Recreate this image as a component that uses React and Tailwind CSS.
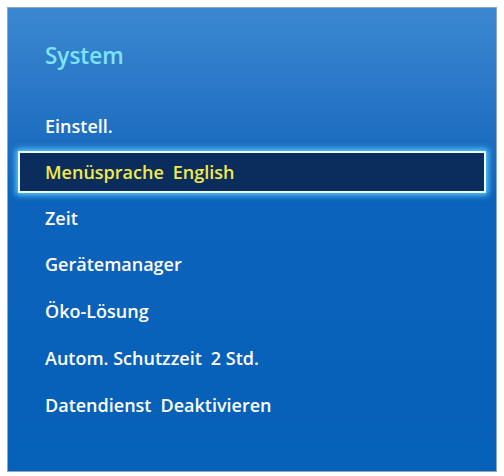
const items = [
  { label: "Einstell." },
  { label: "Menüsprache", value: "English" },
  { label: "Zeit" },
  { label: "Gerätemanager" },
  { label: "Öko-Lösung" },
  { label: "Autom. Schutzzeit", value: "2 Std." },
  { label: "Datendienst", value: "Deaktivieren" },
];

export default function App() {
  return (
    <div className="w-[504px] h-[476px] bg-white p-[7px] font-['Open_Sans',sans-serif]">
      <div className="h-[465px] border border-[#8ea6bf] bg-gradient-to-b from-[#3b87d0] via-[#0d63bb] via-40% to-[#0560b7] flex flex-col">
        {/* title */}
        <div className="h-[95px] pl-[37px] pt-[33px]">
          <h1 className="text-[22.5px] leading-[30px] font-semibold text-[#7ee3ff]">System</h1>
        </div>
        {/* menu */}
        <ul className="flex flex-col text-[18px] font-semibold">
          {items.map((item, i) => {
            const text = (
              <>
                <span>{item.label}</span>
                {item.value && <span className="ml-[9px]">{item.value}</span>}
              </>
            );
            return i === 1 ? (
              <li
                key={item.label}
                className="mx-[10px] h-[42px] my-[2px] flex items-center pl-[25px] bg-[#0a2d5e] border-2 border-[#e8fbff] shadow-[0_0_6px_2px_#5fd0ff] text-[#f4e94a]"
              >
                {text}
              </li>
            ) : (
              <li
                key={item.label}
                className={`mx-[10px] ${i < 3 ? "h-[46px]" : "h-[47px]"} flex items-center pl-[27px] text-white`}
              >
                {text}
              </li>
            );
          })}
        </ul>
      </div>
    </div>
  );
}
